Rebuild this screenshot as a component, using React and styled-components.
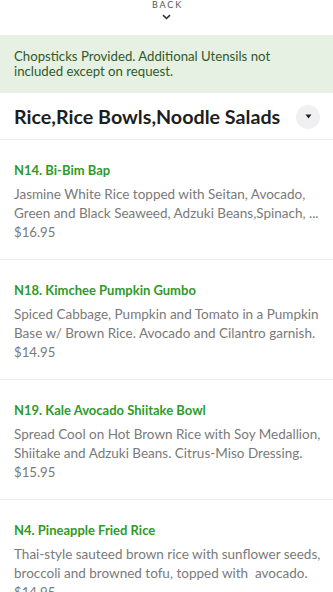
import React from "react";
import styled, { createGlobalStyle } from "styled-components";

const Global = createGlobalStyle`
  html, body { margin: 0; padding: 0; background: #fff; }
  body { font-family: Lato, "Open Sans", sans-serif; -webkit-font-smoothing: antialiased; }
  * { box-sizing: border-box; }
`;

const Page = styled.div`
  width: 333px;
  background: #fff;
`;

const BackBar = styled.div`
  height: 35px;
  display: flex;
  flex-direction: column;
  align-items: center;
`;

const BackLabel = styled.div`
  font-size: 9px;
  line-height: 9px;
  letter-spacing: 1.8px;
  color: #555;
  padding-left: 2px;
`;

const Chevron = styled.svg`
  margin-top: 5px;
  width: 9px;
  height: 6px;
`;

const Notice = styled.div`
  background: #e6f0e3;
  color: #2f5b2b;
  font-size: 13.2px;
  line-height: 15px;
  padding: 14px 14px 14px;
  height: 58px;
`;

const SectionHead = styled.div`
  display: flex;
  align-items: center;
  justify-content: space-between;
  height: 47px;
  padding: 1px 13px 0 14px;
  border-bottom: 1px solid #ececec;
`;

const Title = styled.h2`
  margin: 0;
  font-size: 19.7px;
  font-weight: 700;
  color: #1e1e1e;
`;

const Toggle = styled.div`
  width: 24px;
  height: 24px;
  border-radius: 50%;
  background: #f0eff2;
  display: flex;
  align-items: center;
  justify-content: center;
`;

const Item = styled.div`
  padding: 22px 14px 17px;
  border-bottom: 1px solid #ececec;
`;

const Name = styled.div`
  color: #2e9a2a;
  font-weight: 700;
  font-size: 13px;
  line-height: 16px;
`;

const Desc = styled.div`
  margin-top: 7px;
  color: #7a7a7a;
  font-size: 13.5px;
  line-height: 19px;
  white-space: nowrap;
`;

const Price = styled.div`
  margin-top: 0;
  color: #7a7a7a;
  font-size: 13.2px;
  line-height: 19px;
`;

const items = [
  {
    name: "N14. Bi-Bim Bap",
    desc: ["Jasmine White Rice topped with Seitan, Avocado,", "Green and Black Seaweed, Adzuki Beans,Spinach, ..."],
    price: "$16.95",
  },
  {
    name: "N18. Kimchee Pumpkin Gumbo",
    desc: ["Spiced Cabbage, Pumpkin and Tomato in a Pumpkin", "Base w/ Brown Rice. Avocado and Cilantro garnish."],
    price: "$14.95",
  },
  {
    name: "N19. Kale Avocado Shiitake Bowl",
    desc: ["Spread Cool on Hot Brown Rice with Soy Medallion,", "Shiitake and Adzuki Beans. Citrus-Miso Dressing."],
    price: "$15.95",
  },
  {
    name: "N4. Pineapple Fried Rice",
    desc: ["Thai-style sauteed brown rice with sunflower seeds,", "broccoli and browned tofu, topped with \u00a0avocado."],
    price: "$14.95",
  },
];

export default function App() {
  return (
    <Page>
      <Global />
      <BackBar>
        <BackLabel>BACK</BackLabel>
        <Chevron viewBox="0 0 9 6">
          <path d="M1 1.2 L4.5 4.5 L8 1.2" fill="none" stroke="#333" strokeWidth="1.6" />
        </Chevron>
      </BackBar>
      <Notice>
        Chopsticks Provided. Additional Utensils not included except on request.
      </Notice>
      <SectionHead>
        <Title>Rice,Rice Bowls,Noodle Salads</Title>
        <Toggle>
          <svg width="7" height="5" viewBox="0 0 7 5">
            <path d="M0.5 0.5 L6.5 0.5 L3.5 4.5 Z" fill="#222" />
          </svg>
        </Toggle>
      </SectionHead>
      {items.map((it) => (
        <Item key={it.name}>
          <Name>{it.name}</Name>
          <Desc>
            {it.desc[0]}
            <br />
            {it.desc[1]}
          </Desc>
          <Price>{it.price}</Price>
        </Item>
      ))}
    </Page>
  );
}
